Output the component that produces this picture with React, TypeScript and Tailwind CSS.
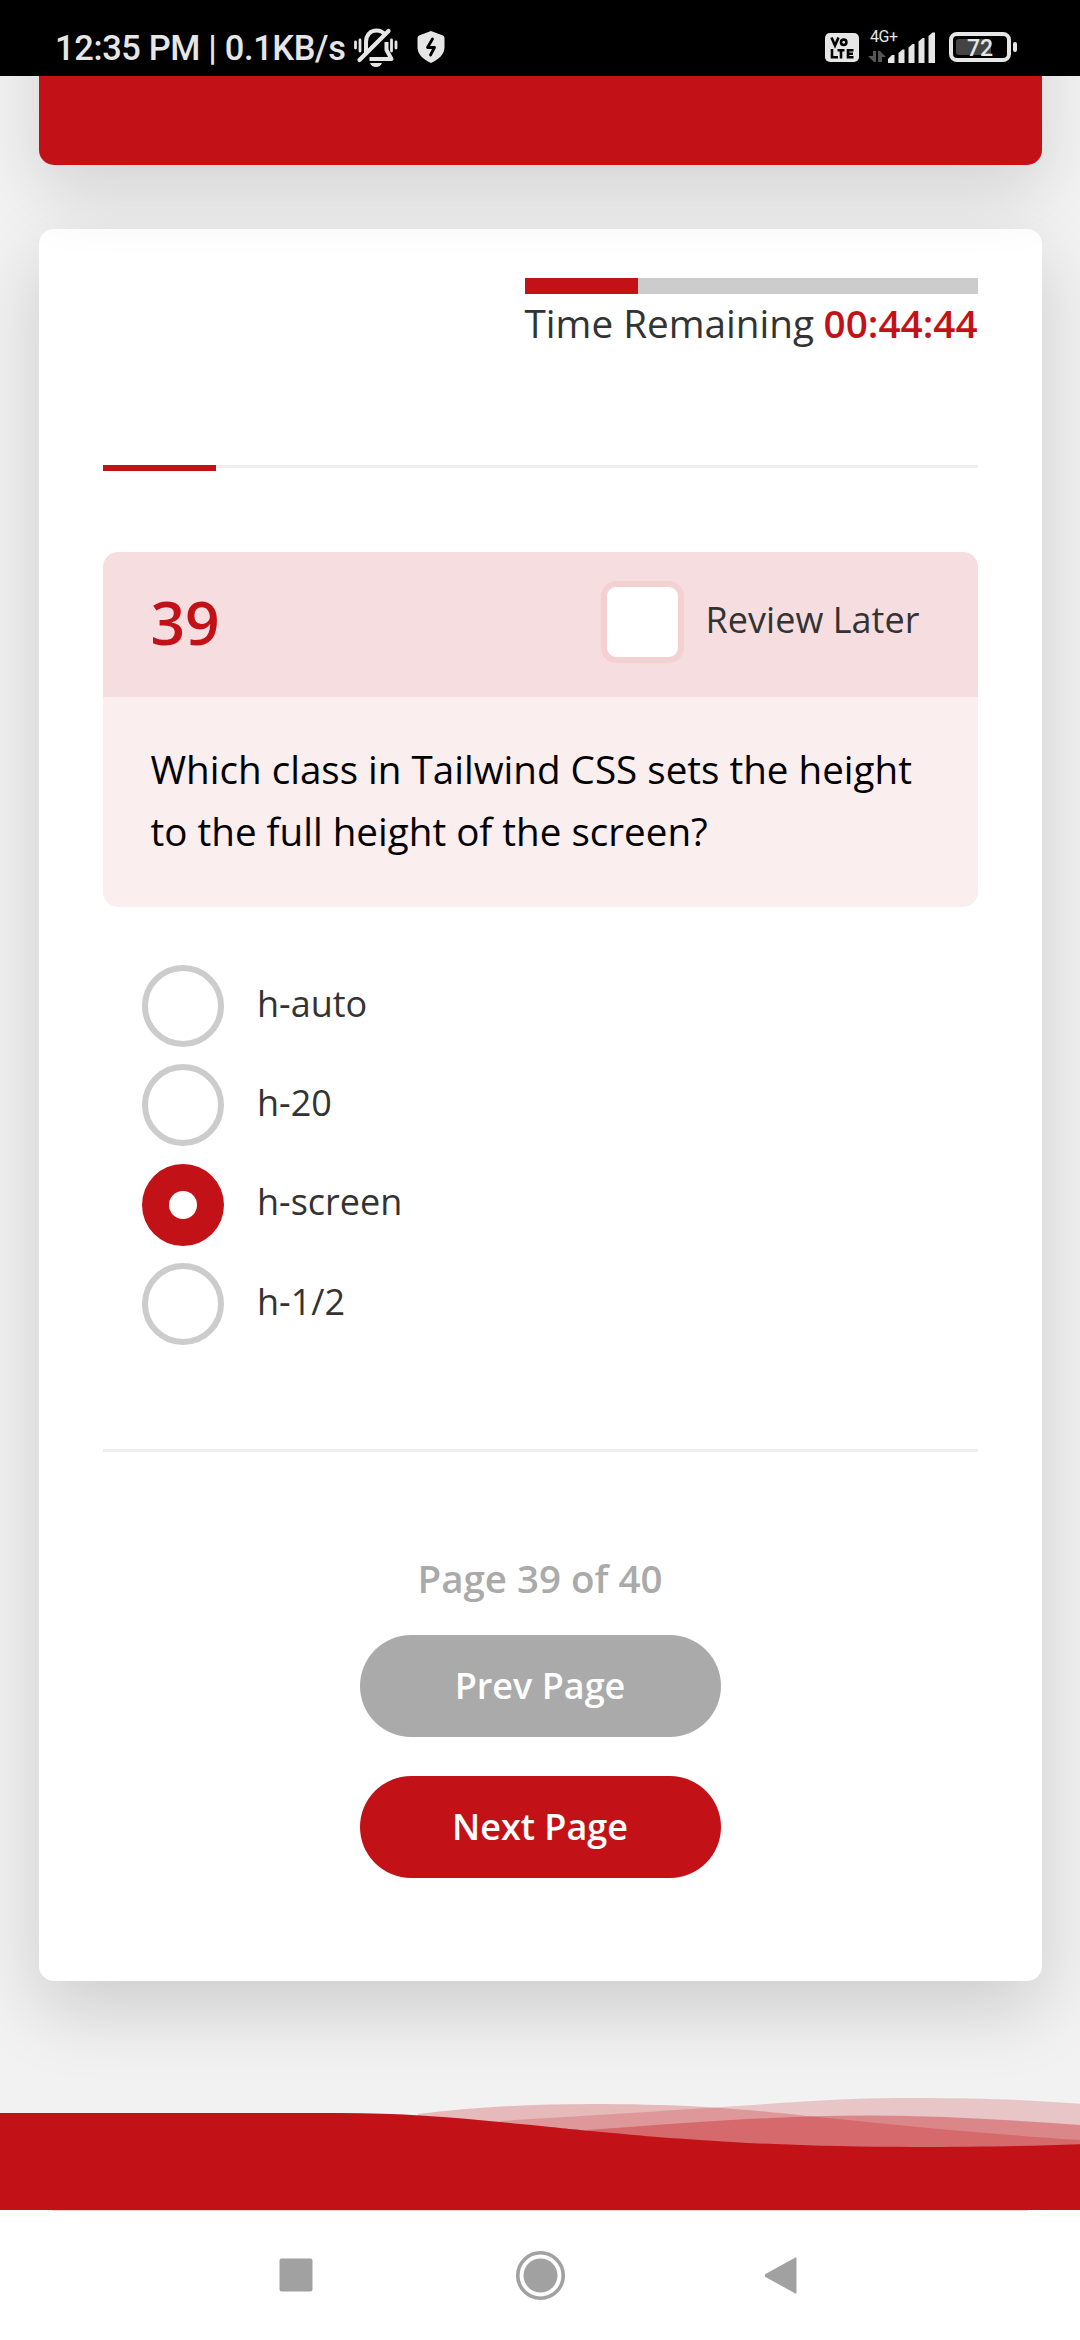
import React from "react";

const OPTIONS = ["h-auto", "h-20", "h-screen", "h-1/2"];
const SELECTED = "h-screen";

function StatusBar() {
  return (
    <header className="relative z-10 flex h-[76px] shrink-0 items-start bg-black font-[Roboto,sans-serif] text-[#e6e6e6]">
      <div className="ml-[55px] mt-[27px] w-[292px] whitespace-nowrap text-[34.4px] font-medium leading-[42px] tracking-[-0.34px]">
        12:35 PM | 0.1KB/s
      </div>
      <svg className="ml-[6px] mt-[28px] h-[40px] w-[46px]" viewBox="353 28 46 40" fill="none" stroke="#e6e6e6">
        <path d="M355.5 42v6M360 40v11M391.5 40v11M396 42v6" strokeWidth="2.8" strokeLinecap="round" />
        <path d="M366 54V42c0-7 4.500-11.500 10.500-11.500 4 0 6.500 1.500 8.500 4M386.500 42v8l5 9h-22" strokeWidth="4" strokeLinejoin="round" />
        <path d="M359.500 60 388.500 31" strokeWidth="4.200" strokeLinecap="round" />
        <path d="M370 63h12c-1 2.500-3 4-6 4s-5-1.500-6-4z" fill="#e6e6e6" stroke="none" />
      </svg>
      <svg className="ml-[18px] mt-[31px] h-[32px] w-[28px]" viewBox="0 0 28 32">
        <path d="M14 0 26 4.500Q27.500 5 27.500 7v9c0 7-5 12-13.500 16C5.500 28 .5 23 .5 16V7Q.5 5 2 4.500z" fill="#e6e6e6" />
        <path d="M15.500 8 10.500 16.500h7L13.500 24" fill="none" stroke="#000" strokeWidth="2.800" strokeLinecap="round" strokeLinejoin="round" />
      </svg>
      <svg className="ml-[380px] mt-[28px] h-[36px] w-[194px]" viewBox="825 28 194 36">
        <rect x="825" y="33" width="34" height="29" rx="5" fill="#e6e6e6" />
        <g fill="none" stroke="#000" strokeWidth="2.600">
          <path d="m831.500 37.500 3.500 8 3.500-8" />
          <circle cx="843.700" cy="42.300" r="2.700" />
          <path d="M832 49v8.200h6M837.500 50.200h7M841 50v8.500M853.500 50.200h-5.500v7h5.500M848 53.700h5" />
        </g>
        <text x="870" y="42" fontSize="16" fill="#e6e6e6" textLength="28">4G+</text>
        <g fill="#555">
          <path d="M873 51h3v11h-2l-6-6h5zM878 51h2l6 6h-4v5h-4z" />
        </g>
        <g fill="#e6e6e6">
          <path d="M888 59l4-4h2.500v8H888zM898.500 53l4-3.500h2V63h-6zM908.500 47.500l4-3.500h2v19h-6zM918.500 41.500l4-3.500h2v25h-6zM928.500 36l4-3.500h2.500V63h-6.500z" />
          <rect x="1013" y="42" width="4" height="10" rx="2" />
        </g>
        <rect x="951" y="34" width="58" height="26" rx="6" fill="none" stroke="#e6e6e6" strokeWidth="4" />
        <rect x="956" y="39" width="35" height="16" rx="3" fill="#444" />
        <text x="967" y="56" fontSize="23" fontWeight="500" fill="#e6e6e6" textLength="26">72</text>
      </svg>
    </header>
  );
}

function Timer() {
  return (
    <section className="ml-auto w-[453px]">
      <div className="h-4 bg-[#ccc]">
        <div className="h-full w-[113px] bg-[#c31217]" />
      </div>
      <p className="flex h-[60px] justify-between whitespace-nowrap text-[38.7px] leading-[58px] text-[#333]">
        <span>Time Remaining</span>
        <span className="font-semibold text-[#c31217]">00:44:44</span>
      </p>
    </section>
  );
}

function Question() {
  return (
    <section className="mt-[81px] overflow-hidden rounded-[15px]">
      <div className="flex h-[145px] bg-[#f6dee0] pl-12">
        <span className="mt-[29px] text-[60.5px] font-semibold leading-[82px] text-[#c31217]">39</span>
        <label className="ml-auto mr-[57px] flex">
          <span className="mt-[29px] h-[82px] w-[83px] rounded-[15px] border-[6px] border-[#f3d1d3] bg-white" />
          <span className="ml-[22px] mt-[43px] w-[215px] whitespace-nowrap text-[36px] leading-[50px] tracking-[0.04px] text-[#333]">
            Review Later
          </span>
        </label>
      </div>
      <p className="h-[210px] whitespace-nowrap bg-[#faeeee] pl-12 pt-[42px] text-[38.6px] leading-[61.6px] text-black">
        Which class in Tailwind CSS sets the height
        <br />
        to the full height of the screen?
      </p>
    </section>
  );
}

function Options() {
  return (
    <div className="mt-[58px] flex flex-col gap-[17.400px] pl-[39px]">
      {OPTIONS.map((o) => (
        <label key={o} className="flex h-[82px]">
          {o === SELECTED ? (
            <span className="flex size-[82px] items-center justify-center rounded-full bg-[#c31217]">
              <span className="size-7 rounded-full bg-white" />
            </span>
          ) : (
            <span className="size-[82px] rounded-full border-[6px] border-[#ccc] bg-white" />
          )}
          <span className="ml-[33.500px] mt-[13.700px] text-[36px] leading-[50px] text-[#333]">{o}</span>
        </label>
      ))}
    </div>
  );
}

function Pager() {
  return (
    <nav className="flex flex-col items-center font-semibold">
      <p className="mt-[96px] text-[38.5px] leading-[60px] text-[#aaa]">Page 39 of 40</p>
      <button className="mt-[27px] h-[102px] w-[361px] rounded-full bg-[#aaa] text-[36px] leading-[50px] text-white">
        Prev Page
      </button>
      <button className="mt-[39px] h-[102px] w-[361px] rounded-full bg-[#c31217] text-[36px] leading-[50px] text-white">
        Next Page
      </button>
    </nav>
  );
}

function Waves() {
  return (
    <svg className="block h-[116px] w-full shrink-0" viewBox="0 2094 1080 116">
      <g fill="#c31217">
        <path fillOpacity=".25" d="M418 2114C470 2107.500 530 2104 592 2104C700 2104 760 2111 807 2116C880 2123 960 2132 1080 2140V2210H418z" />
        <path fillOpacity=".2" d="M500 2121C580 2116 680 2110 760 2104.500C820 2100 860 2098 915 2098C980 2098 1030 2100 1080 2103.700V2210H500z" />
        <path fillOpacity=".35" d="M587 2130C700 2122 780 2115.500 870 2115.500C940 2115.500 1010 2120 1080 2125V2210H587z" />
        <path d="M0 2113H340C400 2113 450 2117 500 2122C540 2126 560 2128 580 2130C640 2135.500 660 2137.500 700 2140C770 2145 850 2147 913 2147C980 2147 1030 2146 1080 2144.300V2210H0z" />
      </g>
    </svg>
  );
}

function NavBar() {
  return (
    <footer className="h-[130px] shrink-0 bg-white">
      <div className="mx-[52px] h-px bg-[#fbd3d5]" />
      <svg className="block h-[129px] w-full" viewBox="0 2211 1080 129" fill="#a1a1a1">
        <rect x="279.500" y="2258.500" width="33" height="33" rx="2" />
        <circle cx="540.500" cy="2275.500" r="22.700" fill="none" stroke="#a1a1a1" strokeWidth="3.600" />
        <circle cx="540.500" cy="2275.500" r="17" />
        <path d="M796.500 2258.500v34q0 2-2 .5l-29-16q-1.500-1.500 0-3l29-16q2-1.500 2 .5z" />
      </svg>
    </footer>
  );
}

export default function App() {
  return (
    <div className="flex h-[2340px] w-[1080px] flex-col overflow-hidden bg-[#f2f2f2] font-['Open_Sans',sans-serif]">
      <StatusBar />
      <div className="relative mx-auto -mt-[176px] h-[265px] w-[1003px] shrink-0 rounded-b-[15px] bg-[#c31217] shadow-[0_26px_69px_rgba(0,0,0,0.13)]" />
      <main className="mx-auto mt-16 h-[1752px] w-[1003px] shrink-0 rounded-[15px] bg-white px-16 pt-[49px] shadow-[0_28px_76px_rgba(0,0,0,0.155)]">
        <Timer />
        <div className="mt-[111px] h-[6px] w-[875px]">
          <div className="h-[3px] bg-[#eee]">
            <div className="h-[6px] w-[113px] bg-[#c31217]" />
          </div>
        </div>
        <Question />
        <Options />
        <div className="mt-[103.800px] h-[3px] bg-[#eee]" />
        <Pager />
      </main>
      <div className="h-[113px] shrink-0" />
      <Waves />
      <NavBar />
    </div>
  );
}
